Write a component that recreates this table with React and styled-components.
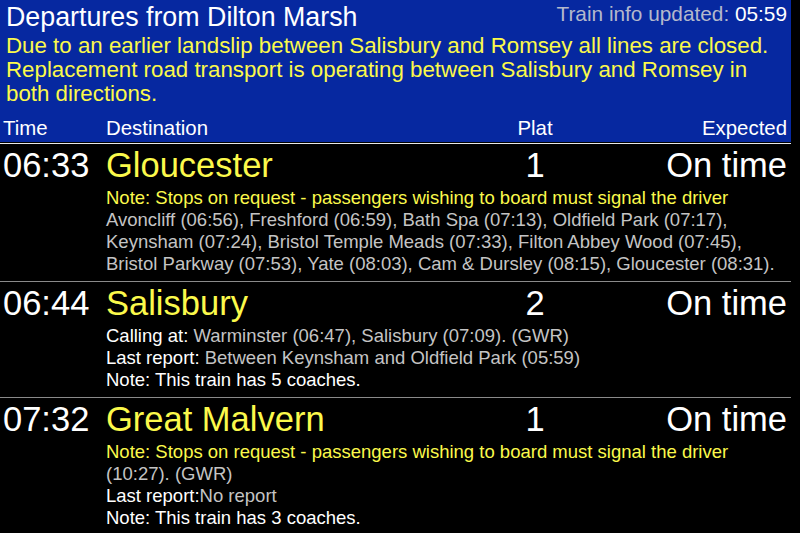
import React from 'react'
import styled, { createGlobalStyle } from 'styled-components'

const GlobalStyle = createGlobalStyle`
  html, body {
    margin: 0;
    padding: 0;
    background: #000;
  }
  body {
    font-family: 'Liberation Sans', Arial, sans-serif;
    color: #fff;
  }
`

const Board = styled.div`
  width: 791px;
  background: #000;
`

const Header = styled.div`
  background: #0628a0;
  padding: 3px 4px 2px 0;
`

const TopLine = styled.div`
  display: flex;
  justify-content: space-between;
  align-items: flex-start;
  padding-left: 6px;
`

const Title = styled.h1`
  margin: 0;
  font-size: 26.8px;
  line-height: 28px;
  font-weight: normal;
  color: #fff;
`

const Updated = styled.div`
  font-size: 20.8px;
  line-height: 22px;
  color: #b4b8cc;

  span {
    color: #fff;
  }
`

const Alert = styled.div`
  margin-top: 3px;
  padding-left: 6px;
  font-size: 22.3px;
  line-height: 24px;
  color: #fbf94b;
`

const Columns = styled.div`
  display: grid;
  grid-template-columns: 106px 369px 120px 196px;
`

const HeadRow = styled(Columns)`
  margin-top: 10px;
  font-size: 20.4px;
  line-height: 24px;
  margin-right: -4px;
`

const Cell = styled.div`
  padding-left: ${p => (p.$first ? '3px' : '0')};
  padding-right: ${p => (p.$last ? '4px' : '0')};
  text-align: ${p => p.$align || 'left'};
  white-space: nowrap;
`

const Rule = styled.div`
  height: 1px;
  margin-top: 1px;
  background: #e8e8e8;
`

const Row = styled(Columns)`
  padding: 1px 0 6px;
  border-bottom: 1px solid #8a8a8a;

  &:last-child {
    border-bottom: none;
  }
`

const Big = styled(Cell)`
  font-size: 34.5px;
  line-height: 40px;
  color: ${p => p.$color || '#fff'};
`

const Details = styled.div`
  grid-column: 2 / 5;
  margin-top: 2px;
  padding-right: 4px;
  font-size: 18.5px;
  line-height: 22px;
`

const Line = styled.div`
  color: ${p => p.$color || '#fff'};
`

const Grey = styled.span`
  color: #c4c4c4;
`

const YELLOW = '#fbf94b'

const departures = [
  {
    time: '06:33',
    dest: 'Gloucester',
    plat: '1',
    expected: 'On time',
    lines: [
      { color: YELLOW, text: 'Note: Stops on request - passengers wishing to board must signal the driver' },
      {
        grey: 'Avoncliff (06:56), Freshford (06:59), Bath Spa (07:13), Oldfield Park (07:17), Keynsham (07:24), Bristol Temple Meads (07:33), Filton Abbey Wood (07:45), Bristol Parkway (07:53), Yate (08:03), Cam & Dursley (08:15), Gloucester (08:31).'
      }
    ]
  },
  {
    time: '06:44',
    dest: 'Salisbury',
    plat: '2',
    expected: 'On time',
    lines: [
      { label: 'Calling at: ', grey: 'Warminster (06:47), Salisbury (07:09). (GWR)' },
      { label: 'Last report: ', grey: 'Between Keynsham and Oldfield Park (05:59)' },
      { label: 'Note: This train has 5 coaches.' }
    ]
  },
  {
    time: '07:32',
    dest: 'Great Malvern',
    plat: '1',
    expected: 'On time',
    lines: [
      { color: YELLOW, text: 'Note: Stops on request - passengers wishing to board must signal the driver' },
      { grey: '(10:27). (GWR)' },
      { label: 'Last report:', grey: 'No report' },
      { label: 'Note: This train has 3 coaches.' }
    ]
  }
]

const App = () => {
  return (
    <Board>
      <GlobalStyle />
      <Header>
        <TopLine>
          <Title>Departures from Dilton Marsh</Title>
          <Updated>
            Train info updated: <span>05:59</span>
          </Updated>
        </TopLine>
        <Alert>
          Due to an earlier landslip between Salisbury and Romsey all lines are closed.
          Replacement road transport is operating between Salisbury and Romsey in both
          directions.
        </Alert>
        <HeadRow>
          <Cell $first>Time</Cell>
          <Cell>Destination</Cell>
          <Cell $align="center">Plat</Cell>
          <Cell $align="right" $last>Expected</Cell>
        </HeadRow>
      </Header>
      <Rule />
      {departures.map((d, i) => (
        <Row key={i}>
          <Big $first>{d.time}</Big>
          <Big $color={YELLOW}>{d.dest}</Big>
          <Big $align="center">{d.plat}</Big>
          <Big $align="right" $last>{d.expected}</Big>
          <Details>
            {d.lines.map((l, j) => (
              <Line key={j} $color={l.color}>
                {l.text}
                {l.label}
                {l.grey && <Grey>{l.grey}</Grey>}
              </Line>
            ))}
          </Details>
        </Row>
      ))}
    </Board>
  )
}

export default App
